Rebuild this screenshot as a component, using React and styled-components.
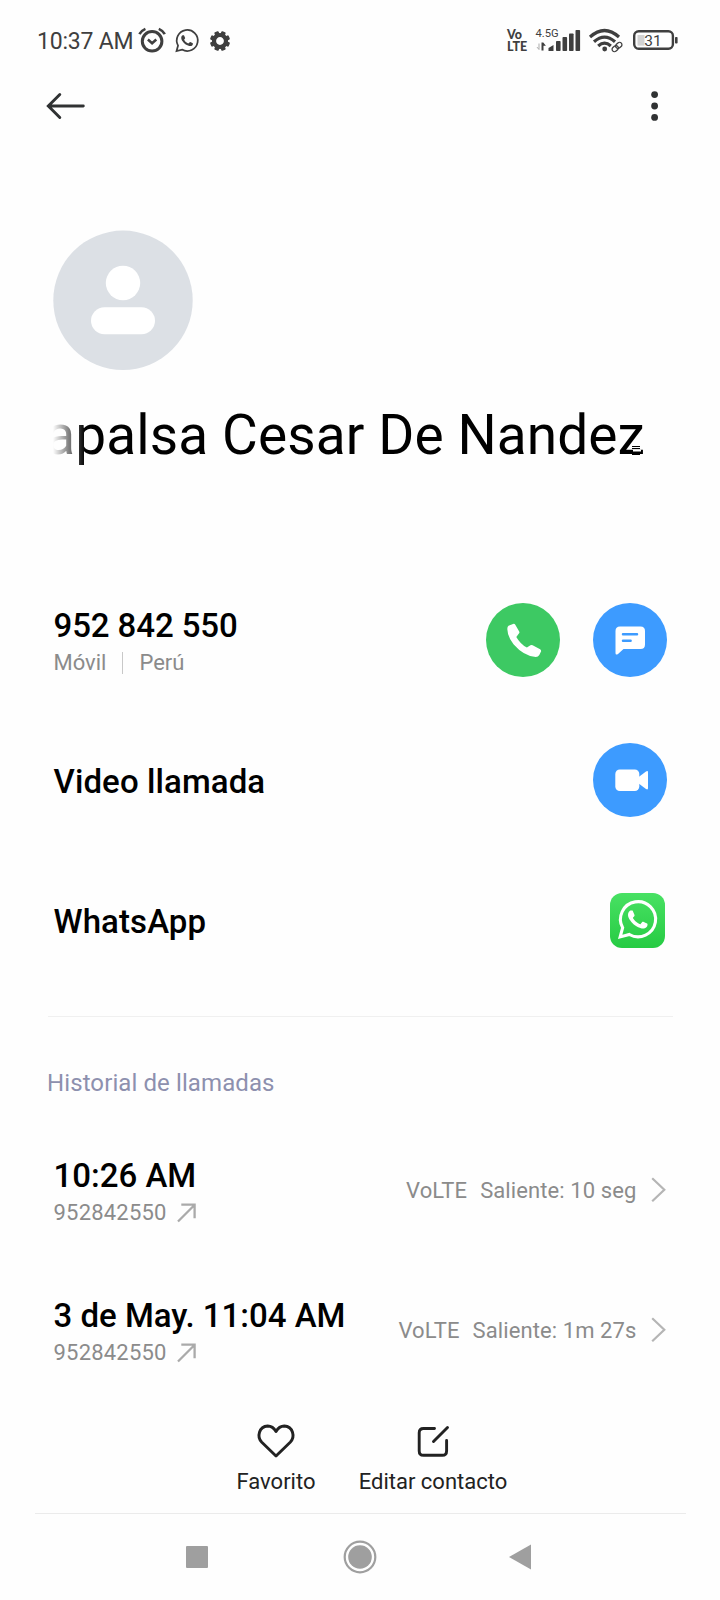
import React from 'react';
import styled, { createGlobalStyle } from 'styled-components';

const colors = {
	text: '#000',
	icon: '#303233',
	status: '#3f3f3f',
	muted: '#8b8b8b',
	section: '#8d90ae',
	line: '#f0f0f0',
	green: '#3dc963',
	blue: '#3d9bff',
	nav: '#9f9f9f',
};

const GlobalStyle = createGlobalStyle`
	body {
		margin: 0;
		background: #fefefe;
		font-family: Roboto, "Liberation Sans", sans-serif;
	}
`;

const Screen = styled.div`
	box-sizing: border-box;
	width: 720px;
	height: 1600px;
	overflow: hidden;
	display: flex;
	flex-direction: column;
	color: ${colors.text};
`;

const Glyph = styled.svg`
	display: block;
	flex: none;
	overflow: visible;
`;

const StatusBar = styled.header`
	height: 80px;
	box-sizing: border-box;
	padding: 1px 42px 0 37px;
	display: flex;
	align-items: center;
	justify-content: space-between;
	color: ${colors.status};
`;

const StatusGroup = styled.div`
	display: flex;
	align-items: center;
	gap: ${props => props.gap}px;
`;

const Clock = styled.span`
	font-size: 23px;
	line-height: 28px;
	width: 93px;
	white-space: nowrap;
	letter-spacing: -0.2px;
	margin-top: 2px;
`;

const Volte = styled.div`
	width: 22px;
	display: flex;
	flex-direction: column;
	font: 900 12.5px/12px Lato, "Liberation Sans", sans-serif;
`;

const Toolbar = styled.nav`
	height: 52px;
	padding: 0 61px 0 46px;
	display: flex;
	align-items: center;
	justify-content: space-between;
	color: ${colors.icon};
`;

const Profile = styled.section`
	padding: 98px 53px 0;
	height: 335px;
`;

const Name = styled.h1`
	margin: 30px 0 0 -6px;
	height: 70px;
	display: flex;
	justify-content: flex-end;
	width: 598px;
	font-size: 55px;
	line-height: 70px;
	font-weight: 400;
	white-space: nowrap;
	letter-spacing: 0.1px;
	mask-image: linear-gradient(to right, transparent 6px, #000 38px);
`;

const NameText = styled.span`
	position: relative;
`;

// small stroke mark lying over the end of the name
const Mark = styled(Glyph)`
	position: absolute;
	right: 4px;
	bottom: 15px;
`;

const Actions = styled.section`
	padding: 5px 53px 0 53.5px;
`;

const Row = styled.div`
	height: 140px;
	display: flex;
	align-items: center;
	justify-content: space-between;
`;

const Lines = styled.div`
	padding-top: ${props => props.top}px;
`;

const Title = styled.div`
	font-size: 33px;
	line-height: 38px;
	font-weight: 500;
	white-space: nowrap;
	letter-spacing: ${props => props.$spacing || 0}px;
`;

const Sub = styled.div`
	display: flex;
	align-items: center;
	font-size: 22px;
	line-height: 36px;
	color: ${colors.muted};
	letter-spacing: ${props => props.$spacing || 0}px;
`;

const Separator = styled.i`
	width: 1px;
	height: 22px;
	margin: 0 16px;
	background: #c8c8c8;
`;

const Buttons = styled.div`
	display: flex;
	gap: 33px;
`;

const RoundButton = styled.button`
	width: 74px;
	height: 74px;
	padding: 0;
	border: 0;
	border-radius: 50%;
	background: ${props => props.color};
	display: block;
`;

const AppIcon = styled.div`
	margin-right: 2px;
`;

const Divider = styled.hr`
	width: 625px;
	height: 1px;
	margin: 26px 0 0 48px;
	border: 0;
	flex: none;
	background: ${colors.line};
`;

const SectionTitle = styled.h2`
	margin: 0;
	padding: 50px 0 0 47px;
	height: 53px;
	font-size: 24px;
	line-height: 32px;
	font-weight: 400;
	letter-spacing: 0.1px;
	color: ${colors.section};
`;

const CallLog = styled.section`
	padding: 0 54px 0 53.5px;
`;

const Duration = styled.div`
	display: flex;
	align-items: center;
	font-size: 22px;
	line-height: 30px;
	letter-spacing: 0.1px;
	color: ${colors.muted};

	span {
		padding-top: 2px;
	}
	span + span {
		margin: 0 14.5px 0 13px;
	}
`;

const BottomBar = styled.footer`
	height: 113px;
	padding-left: 228px;
	display: flex;
	align-items: flex-start;
	gap: 28px;
	color: ${colors.icon};
`;

const BottomItem = styled.div`
	width: ${props => props.width}px;
	padding-top: 24px;
	display: flex;
	flex-direction: column;
	align-items: center;
	gap: 7px;
	font-size: 22px;
	line-height: 30px;
	white-space: nowrap;
	color: #222;
`;

const NavLine = styled(Divider)`
	width: 651px;
	margin: 0 0 0 35px;
	background: #ebebeb;
`;

const NavBar = styled.nav`
	height: 86px;
	padding: 0 189px 0 186px;
	display: flex;
	align-items: center;
	justify-content: space-between;
	color: ${colors.nav};
`;

const HANDSET =
	'M17.5 14.4c-.3-.15-1.76-.87-2.03-.97-.27-.1-.47-.15-.67.15-.2.3-.77.97-.94 1.16-.17.2-.35.22-.64.08-.3-.15-1.26-.46-2.4-1.48-.88-.79-1.48-1.76-1.65-2.06-.17-.3-.02-.46.13-.6.13-.14.3-.35.45-.53.15-.17.2-.3.3-.5.1-.2.05-.37-.03-.52-.07-.15-.67-1.61-.91-2.2-.25-.59-.49-.51-.67-.52h-.57c-.2 0-.52.07-.8.37-.27.3-1.03 1.02-1.03 2.48s1.07 2.88 1.21 3.07c.15.2 2.1 3.2 5.08 4.49.7.3 1.26.49 1.69.62.71.23 1.36.2 1.87.12.57-.08 1.76-.72 2-1.41.25-.7.25-1.29.18-1.41-.07-.13-.27-.2-.57-.35z';
const BUBBLE = 'M1.2 22.8l1.55-5.7A10.85 10.85 0 1 1 6.9 21.3z';

const AlarmIcon = () => (
	<Glyph width="27" height="26" fill="none" stroke="currentColor">
		<circle cx="13.1" cy="13.3" r="9.8" strokeWidth="3" />
		<path d="M8.9 11.5l4.2 3.8 4.2-3.800" strokeWidth="2.5" />
		<path d="M.4 6.2Q2.300 2.600 6.400.900M25.800 6.200Q23.900 2.600 19.800.900" strokeWidth="2.6" />
	</Glyph>
);

const WhatsAppOutline = () => (
	<Glyph width="24" height="24" viewBox="0 0 24 24.8">
		<path d={BUBBLE} fill="none" stroke="currentColor" strokeWidth="1.8" />
		<path d={HANDSET} fill="currentColor" />
	</Glyph>
);

const GearIcon = () => (
	<Glyph width="22" height="20" viewBox="-12 -10 22 20">
		<circle r="6" fill="none" stroke="currentColor" strokeWidth="4.2" />
		{[22.5, 67.5, 112.5, 157.5, 202.5, 247.5, 292.5, 337.5].map(a => (
			<rect
				key={a}
				x="-2.3"
				y="-10"
				width="4.6"
				height="4"
				rx="1"
				fill="currentColor"
				transform={`rotate(${a})`}
			/>
		))}
	</Glyph>
);

const SignalIcon = () => (
	<Glyph width="46" height="24" fill="currentColor">
		<text x="-.5" y="8" fontSize="11.2">
			4.5G
		</text>
		<path d="M3 14.5v6M3 20.500l-2-2.400" fill="none" stroke="#aaa" />
		<path d="M5.500 21.500v-8h1.800l2.600 3.200H7.500v4.800z" />
		<path d="M12.500 22v-3l5-3v6z" />
		<rect x="20" y="12" width="4.6" height="10" rx="0.8" />
		<rect x="26.500" y="8.100" width="4.6" height="13.900" rx="0.8" />
		<rect x="33" y="4.500" width="4.600" height="17.500" rx="0.8" />
		<rect x="39.500" y="1" width="4.600" height="21" rx="0.8" />
	</Glyph>
);

const WifiIcon = () => (
	<Glyph width="37" height="24" fill="none" stroke="currentColor" strokeWidth="3.2">
		<path d="M1 8Q15.500-5 30 8" />
		<path d="M5 12.800Q15.500 3.400 26 12.800" />
		<path d="M9.200 17Q15.500 11.400 21.800 17" />
		<circle cx="15.700" cy="20" r="2.400" fill="currentColor" stroke="none" />
		<g
			transform="translate(28 18) rotate(-42)"
			stroke="currentColor"
			strokeWidth="1.3"
		>
			<rect x="-5.800" y="-2.400" width="6.800" height="4.800" rx="2.400" fill="#fefefe" />
			<rect x="-1" y="-2.400" width="6.800" height="4.800" rx="2.400" />
		</g>
	</Glyph>
);

const BatteryIcon = () => (
	<Glyph width="45" height="22">
		<rect x="1.2" y="1.200" width="38.700" height="17.600" rx="4.500" fill="none" stroke="currentColor" strokeWidth="2.4" />
		<rect x="4.500" y="5" width="7" height="10.600" fill="#d3d3d3" />
		<rect x="42" y="7" width="2.600" height="6.600" rx="0.8" fill="currentColor" />
		<text x="20" y="15.700" fontSize="15.5" textAnchor="middle" fill="currentColor">
			31
		</text>
	</Glyph>
);

const BackIcon = () => (
	<Glyph width="40" height="28" fill="none" stroke="currentColor" strokeWidth="2.9" strokeLinecap="round">
		<path d="M2.500 14H37.300M13.800 2.500L2.300 14l11.500 11.500" />
	</Glyph>
);

const MoreIcon = () => (
	<Glyph width="8" height="32" fill="currentColor">
		<circle cx="3.6" cy="4.6" r="3.4" />
		<circle cx="3.6" cy="16" r="3.4" />
		<circle cx="3.6" cy="27.4" r="3.4" />
	</Glyph>
);

const Avatar = () => (
	<Glyph width="140" height="140">
		<circle cx="70" cy="70.3" r="69.7" fill="#dce0e5" />
		<circle cx="70" cy="53" r="17.2" fill="#fff" />
		<rect x="38" y="77.3" width="64" height="27" rx="13.5" fill="#fff" />
	</Glyph>
);

const PhoneIcon = () => (
	<Glyph width="74" height="74" fill="#fff">
		<path d="M22.500 22.800l4.500-1.900q1.600-.5 2.300.9l3.900 6.600q.6 1.200-.3 2.200l-2.600 3.300q4 7 10.600 10.700l3.500-2.300q1.200-.6 2.200 0l7.500 4q1.500 1 .8 2.500l-1.600 3.300q-1.100 2-3.500 2Q38 53.300 27.500 41.300 21.500 33.500 21.300 26q0-2.200 1.200-3.200z" />
	</Glyph>
);

const MessageIcon = () => (
	<Glyph width="74" height="74">
		<path d="M27 23.600h20.500q4.500 0 4.500 4.500v13.300q0 4.500-4.500 4.500H30.500l-5.500 5q-2.500 1.500-2.500-1V28.100q0-4.500 4.500-4.500z" fill="#fff" />
		<path d="M30 31.200h14M30 37.800h7.600" stroke={colors.blue} strokeWidth="2.5" strokeLinecap="round" />
	</Glyph>
);

const VideoIcon = () => (
	<Glyph width="74" height="74" fill="#fff">
		<rect x="22.3" y="26.5" width="24" height="21.5" rx="4.5" />
		<path d="M45 34.500l8-6.100q2-1.200 2 .8v15.800q0 2.200-2 .9L45 40z" />
	</Glyph>
);

const WhatsAppIcon = () => (
	<Glyph width="55" height="55">
		<defs>
			<linearGradient id="wa" x1="0" y1="0" x2="0" y2="1">
				<stop offset="0" stopColor="#48e163" />
				<stop offset="1" stopColor="#26cb43" />
			</linearGradient>
		</defs>
		<rect width="55" height="55" rx="12" fill="url(#wa)" />
		<g transform="translate(8.2 7) scale(1.62)">
			<path d={BUBBLE} fill="none" stroke="#fff" strokeWidth="1.9" />
			<path d={HANDSET} fill="#fff" />
		</g>
	</Glyph>
);

const OutgoingIcon = styled(Glyph)`
	margin-left: 10px;
`;

const Outgoing = () => (
	<OutgoingIcon width="20" height="20" fill="none" stroke="#aaa" strokeWidth="2.3">
		<path d="M1 18.500L17.500 2M4.300 1.600h13.300v13.600" />
	</OutgoingIcon>
);

const Chevron = () => (
	<Glyph width="15" height="26" fill="none" stroke="#b5b5b5" strokeWidth="2.2">
		<path d="M1.200 1.300L13.300 12.800 1.200 24.300" />
	</Glyph>
);

const HeartIcon = () => (
	<Glyph width="38" height="36" fill="none" stroke="currentColor" strokeWidth="2.9" strokeLinejoin="round">
		<path d="M19 32L4.800 18.300C-.5 12.800 2 2.400 10.700 2c3.600 0 6.300 2 8.300 5.600C21 4 23.700 2 27.300 2 36 2.400 38.500 12.800 33.200 18.300z" />
	</Glyph>
);

const EditIcon = () => (
	<Glyph width="34" height="36" fill="none" stroke="currentColor" strokeWidth="2.9" strokeLinecap="round">
		<path d="M18.500 4.500H7.500Q3.200 4.500 3.200 8.800v18.200q0 4.300 4.300 4.300h18.800q4.300 0 4.300-4.300V16.500M17.500 17.500L31.500 3.500" />
	</Glyph>
);

const calls = [
	{ time: '10:26 AM', number: '952842550', duration: 'Saliente: 10 seg' },
	{ time: '3 de May. 11:04 AM', number: '952842550', duration: 'Saliente: 1m 27s' },
];

export default function App() {
	return (
		<Screen>
			<GlobalStyle />
			<StatusBar>
				<StatusGroup gap={9}>
					<Clock>10:37 AM</Clock>
					<AlarmIcon />
					<WhatsAppOutline />
					<GearIcon />
				</StatusGroup>
				<StatusGroup gap={7}>
					<Volte>
						<span>Vo</span>
						<span>LTE</span>
					</Volte>
					<SignalIcon />
					<WifiIcon />
					<BatteryIcon />
				</StatusGroup>
			</StatusBar>
			<Toolbar>
				<BackIcon />
				<MoreIcon />
			</Toolbar>
			<Profile>
				<Avatar />
				<Name>
					<NameText>
						apalsa Cesar De Nandez
						<Mark width="9" height="9">
							<path d="M1 3.5h8v2H1z" fill="#fff" />
							<path d="M0 .5h8M0 2.500h8M0 6.500h8M0 8.500h8" stroke="#000" />
						</Mark>
					</NameText>
				</Name>
			</Profile>
			<Actions>
				<Row>
					<Lines top={8}>
						<Title $spacing={-0.1}>952 842 550</Title>
						<Sub>
							Móvil
							<Separator />
							Perú
						</Sub>
					</Lines>
					<Buttons>
						<RoundButton color={colors.green}>
							<PhoneIcon />
						</RoundButton>
						<RoundButton color={colors.blue}>
							<MessageIcon />
						</RoundButton>
					</Buttons>
				</Row>
				<Row>
					<Lines top={3}>
						<Title $spacing={0.1}>Video llamada</Title>
					</Lines>
					<RoundButton color={colors.blue}>
						<VideoIcon />
					</RoundButton>
				</Row>
				<Row>
					<Lines top={3}>
						<Title $spacing={0.1}>WhatsApp</Title>
					</Lines>
					<AppIcon>
						<WhatsAppIcon />
					</AppIcon>
				</Row>
			</Actions>
			<Divider />
			<SectionTitle>Historial de llamadas</SectionTitle>
			<CallLog>
				{calls.map(call => (
					<Row key={call.time}>
						<Lines top={7}>
							<Title>{call.time}</Title>
							<Sub $spacing={0.2}>
								{call.number}
								<Outgoing />
							</Sub>
						</Lines>
						<Duration>
							<span>VoLTE</span>
							<span>{call.duration}</span>
							<Chevron />
						</Duration>
					</Row>
				))}
			</CallLog>
			<BottomBar>
				<BottomItem width={96}>
					<HeartIcon />
					Favorito
				</BottomItem>
				<BottomItem width={162}>
					<EditIcon />
					Editar contacto
				</BottomItem>
			</BottomBar>
			<NavLine />
			<NavBar>
				<Glyph width="22" height="22">
					<rect width="22" height="22" rx="1" fill="currentColor" />
				</Glyph>
				<Glyph width="34" height="34">
					<circle cx="18" cy="17" r="15.3" fill="none" stroke="currentColor" strokeWidth="2.2" />
					<circle cx="18" cy="17" r="11.8" fill="currentColor" />
				</Glyph>
				<Glyph width="22" height="26">
					<path d="M0 13L22 .5v25z" fill="currentColor" />
				</Glyph>
			</NavBar>
		</Screen>
	);
}
